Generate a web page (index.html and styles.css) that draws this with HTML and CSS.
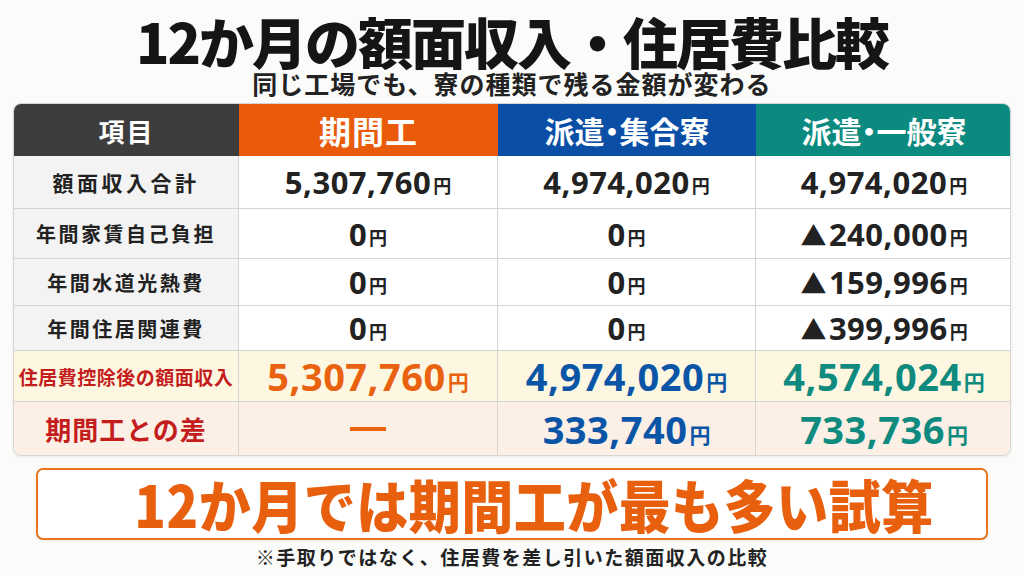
FILE: index.html
```html
<!DOCTYPE html>
<html lang="ja">
<head>
<meta charset="utf-8">
<title>12か月の額面収入・住居費比較</title>
<link rel="stylesheet" href="styles.css">
</head>
<body>
<div class="page">
  <h1 class="title">12か月の額面収入・住居費比較</h1>
  <p class="subtitle">同じ工場でも、寮の種類で残る金額が変わる</p>

  <div class="table">
    <div class="cell head head-item">項目</div>
    <div class="cell head head-kikan">期間工</div>
    <div class="cell head head-shugo">派遣・集合寮</div>
    <div class="cell head head-ippan">派遣・一般寮</div>

    <div class="cell label label-wide">額面収入合計</div>
    <div class="cell val"><span class="num">5,307,760</span><span class="yen">円</span></div>
    <div class="cell val"><span class="num">4,974,020</span><span class="yen">円</span></div>
    <div class="cell val"><span class="num">4,974,020</span><span class="yen">円</span></div>

    <div class="cell label">年間家賃自己負担</div>
    <div class="cell val"><span class="num">0</span><span class="yen">円</span></div>
    <div class="cell val"><span class="num">0</span><span class="yen">円</span></div>
    <div class="cell val"><span class="num"><span class="tri">▲</span>240,000</span><span class="yen">円</span></div>

    <div class="cell label">年間水道光熱費</div>
    <div class="cell val"><span class="num">0</span><span class="yen">円</span></div>
    <div class="cell val"><span class="num">0</span><span class="yen">円</span></div>
    <div class="cell val"><span class="num"><span class="tri">▲</span>159,996</span><span class="yen">円</span></div>

    <div class="cell label">年間住居関連費</div>
    <div class="cell val"><span class="num">0</span><span class="yen">円</span></div>
    <div class="cell val"><span class="num">0</span><span class="yen">円</span></div>
    <div class="cell val"><span class="num"><span class="tri">▲</span>399,996</span><span class="yen">円</span></div>

    <div class="cell label net-label row-net">住居費控除後の額面収入</div>
    <div class="cell val big row-net c-orange"><span class="num">5,307,760</span><span class="yen">円</span></div>
    <div class="cell val big row-net c-blue"><span class="num">4,974,020</span><span class="yen">円</span></div>
    <div class="cell val big row-net c-teal"><span class="num">4,574,024</span><span class="yen">円</span></div>

    <div class="cell label diff-label row-diff">期間工との差</div>
    <div class="cell val big row-diff c-orange"><span class="dash"></span></div>
    <div class="cell val big row-diff c-blue"><span class="num">333,740</span><span class="yen">円</span></div>
    <div class="cell val big row-diff c-teal"><span class="num">733,736</span><span class="yen">円</span></div>
  </div>

  <div class="conclusion"><span class="conclusion-text">12か月では期間工が最も多い試算</span></div>
  <p class="note">※手取りではなく、住居費を差し引いた額面収入の比較</p>
</div>
</body>
</html>
```

FILE: styles.css
```css
* { box-sizing: border-box; }

html, body {
  margin: 0;
  padding: 0;
}

body {
  width: 1024px;
  height: 576px;
  overflow: hidden;
  background: #fbfbfa;
  font-family: "Noto Sans CJK JP", "Noto Sans", sans-serif;
  color: #1f1f1f;
}

.page {
  display: flex;
  flex-direction: column;
  align-items: center;
  padding-top: 0;
}

.title {
  margin: 0;
  font-size: 55px;
  line-height: 80px;
  font-weight: 900;
  letter-spacing: -2px;
  color: #151515;
}

.subtitle {
  margin: -11px 0 0;
  font-size: 25px;
  line-height: 28px;
  font-weight: 700;
  letter-spacing: 1px;
  color: #222;
}

.table {
  margin-top: 6px;
  width: 998px;
  display: grid;
  grid-template-columns: 225px 259px 258px 256px;
  grid-template-rows: 52px 53px 50px 47px 45px 51px 53px;
  border: 1px solid #d6d6d6;
  border-radius: 8px;
  overflow: hidden;
  background: #fff;
  box-shadow: 0 1px 3px rgba(0, 0, 0, 0.08);
}

.cell {
  display: flex;
  align-items: center;
  justify-content: center;
  border-right: 1px solid #d4d4d4;
  border-bottom: 1px solid #d4d4d4;
  white-space: nowrap;
}

.cell:nth-child(4n) { border-right: none; }

.head {
  color: #fff;
  font-size: 30px;
  font-weight: 700;
  border-bottom: none;
  border-right: none;
  font-feature-settings: "halt";
}

.head-item { background: #3d3d3d; font-size: 26px; letter-spacing: 2px; }
.head-kikan { background: #e95b0b; font-size: 32px; letter-spacing: 1px; }
.head-shugo { background: #0a4ea6; }
.head-ippan { background: #0d8a80; }

.label {
  background: #f3f3f3;
  font-size: 20px;
  font-weight: 700;
  letter-spacing: 2.5px;
  color: #222;
}

.label-wide {
  font-size: 21px;
  letter-spacing: 3.5px;
}

.val {
  font-family: "Noto Sans", "Noto Sans CJK JP", sans-serif;
  font-weight: 700;
  color: #222;
}

.num {
  font-size: 31px;
  letter-spacing: 0.5px;
}

.tri {
  font-family: "Noto Sans CJK JP", sans-serif;
  font-size: 26px;
  margin-right: 2px;
}

.yen {
  font-family: "Noto Sans CJK JP", sans-serif;
  font-size: 18px;
  margin-left: 2px;
  padding-top: 6px;
}

.big .num { font-size: 38px; }
.big .yen { font-size: 21px; padding-top: 10px; }

.row-net { background: #fdf7e2; }
.row-diff { background: #fcf0e6; border-bottom: none; }

.net-label {
  color: #c41d1d;
  font-size: 19px;
  letter-spacing: 0.5px;
}

.diff-label {
  color: #c41d1d;
  font-size: 26px;
  letter-spacing: 1px;
}

.c-orange { color: #e8620f; }
.c-blue { color: #0b55a7; }
.c-teal { color: #0f8a7f; }

.dash {
  display: block;
  width: 36px;
  height: 4px;
  background: #e8620f;
}

.conclusion {
  margin-top: 12px;
  width: 952px;
  height: 72px;
  border: 2px solid #ea7420;
  border-radius: 7px;
  background: #fff;
  display: flex;
  align-items: center;
  justify-content: center;
  padding-left: 44px;
  color: #e8600e;
  font-size: 52px;
  font-weight: 900;
  letter-spacing: 0.5px;
  box-shadow: 0 1px 3px rgba(0, 0, 0, 0.08);
}

.conclusion-text {
  display: inline-block;
  line-height: 1;
  transform: scaleY(1.1);
}

.note {
  margin: 4px 0 0;
  font-size: 19px;
  line-height: 26px;
  font-weight: 700;
  letter-spacing: 1.5px;
  color: #222;
}
```
